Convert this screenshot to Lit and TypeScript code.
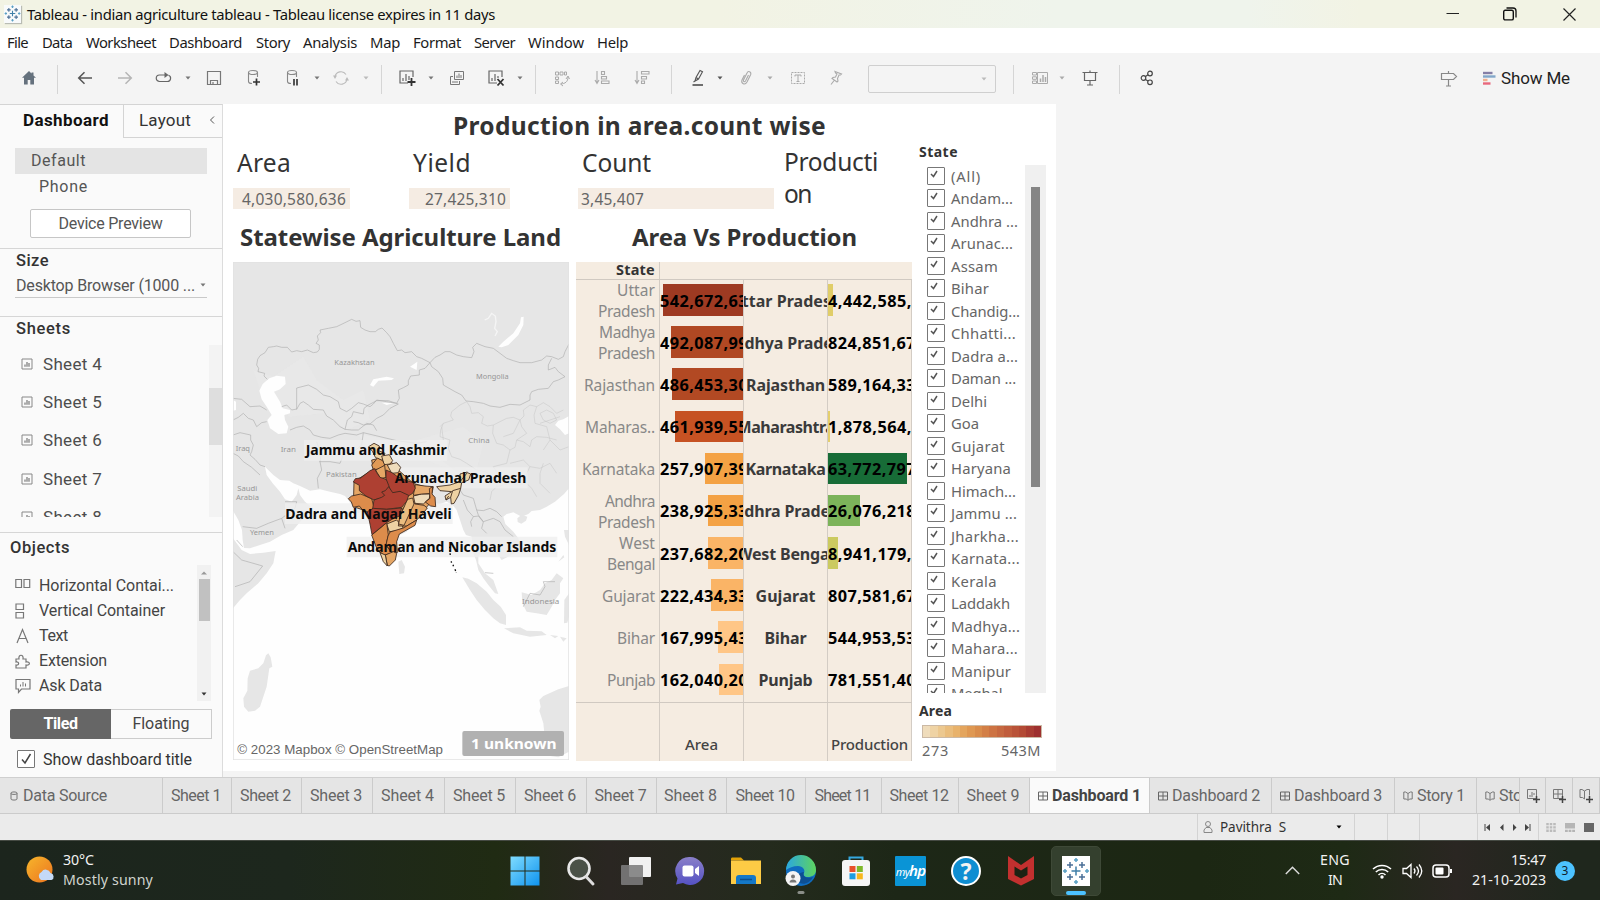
import { LitElement, html, svg, css } from "lit";
import { customElement, property } from "lit/decorators.js";

/** One line of text whose tracking is adjusted so that it spans `w` pixels. */
@customElement("fit-text")
class FitText extends LitElement {
  @property({ type: Number }) w = 0;
  @property() text = "";
  static styles = css`
    :host { display: inline-block; white-space: pre; flex: none; }
    span { display: inline-block; }
  `;
  firstUpdated() {
    const s = this.renderRoot.querySelector("span") as HTMLElement;
    const nat = s.getBoundingClientRect().width;
    if (this.w && nat) {
      s.style.letterSpacing = (this.w - nat) / this.text.length + "px";
      this.style.width = this.w + "px";
    }
  }
  render() { return html`<span>${this.text}</span>`; }
}

const t = (text: string, w = 0) => html`<fit-text .text=${text} .w=${w}></fit-text>`;

/** Items given as [left, width, content]; spacing between them is derived. */
type Item = [number, number, unknown, string?];
const row = (items: Item[], start = 0) => {
  let x = start;
  return items.map(([l, w, c, cls]) => {
    const m = l - x;
    x = l + w;
    return html`<div class="cell ${cls || ""}" style="margin-left:${m}px;width:${w}px">${c}</div>`;
  });
};

const icon = (w: number, h: number, body: unknown, cls = "") =>
  html`<svg class="ic ${cls}" width=${w} height=${h} viewBox="0 0 ${w} ${h}">${body}</svg>`;

const caret = (c = "#777") => icon(6, 4, svg`<path d="M0.5 0.5h5L3 3.6z" fill=${c}/>`);

const T = {
  home: icon(16, 16, svg`<path d="M8 1 1 7.800h2v6.700h3.700V10h2.600v4.500H13V7.800h2L12.500 5.400V2.500h-2v1z" fill="#65717d"/>`),
  back: icon(16, 14, svg`<path d="M15 7H2M7.500 1.200 1.700 7l5.800 5.800" fill="none" stroke="#555" stroke-width="1.500"/>`),
  fwd: icon(16, 14, svg`<path d="M1 7h13M8.500 1.200 14.300 7l-5.800 5.800" fill="none" stroke="#b5b5b5" stroke-width="1.500"/>`),
  redo: icon(18, 14, svg`<path d="M10.500 4H4.500a3.200 3.200 0 0 0 0 6.500h8a3.200 3.200 0 0 0 1-6.200" fill="none" stroke="#666" stroke-width="1.200"/><path d="M9.500 1v6l4-3z" fill="#666"/>`),
  save: icon(16, 16, svg`<path d="M1.500 1.500h13v13h-13zM4.500 14.500v-4h7v4M7 14v-2" fill="none" stroke="#777" stroke-width="1.200"/>`),
  dbAdd: icon(14, 18, svg`<g fill="none" stroke="#888" stroke-width="1.100"><ellipse cx="6" cy="3.500" rx="4.500" ry="2"/><path d="M1.500 3.500v9c0 1 1.500 2 3.500 2M10.500 3.500V8"/></g><path d="M9.500 9.500v7M6 13h7" stroke="#333" stroke-width="1.700"/>`),
  dbPause: icon(14, 18, svg`<g fill="none" stroke="#888" stroke-width="1.100"><ellipse cx="6" cy="3.500" rx="4.500" ry="2"/><path d="M1.500 3.500v9c0 1 1.500 2 3.500 2M10.500 3.500V8"/></g><path d="M8 10v6.500M11 10v6.500" stroke="#444" stroke-width="1.800"/>`),
  refresh: icon(16, 16, svg`<path d="M2 7a6 6 0 0 1 11-2.500M14 9a6 6 0 0 1-11 2.500" fill="none" stroke="#bbb" stroke-width="1.100"/><path d="M0 5.500h4L2 9zM12 10.500h4L14 7z" fill="#bbb"/>`),
  newSheet: icon(18, 18, svg`<g fill="none" stroke="#666" stroke-width="1.200"><path d="M15 8V2H2v12h8"/><path d="M5 12V9M8 12V5M11 11V7"/></g><path d="M13.500 9v8M9.500 13h8" stroke="#333" stroke-width="1.800"/>`),
  dup: icon(16, 16, svg`<g fill="none" stroke="#777" stroke-width="1"><path d="M5.500 1.500h9v8h-9zM8 8V5.500M10 8V3.500M12 8V5M4 6.500H1.500v8h9V11M4 13v-2M6 13v-2M8 13v-2"/></g>`),
  clear: icon(18, 18, svg`<g fill="none" stroke="#666" stroke-width="1.200"><path d="M15 8V2H2v12h8"/><path d="M5 12V9M8 12V5M11 9V7"/></g><path d="m10.500 10 6 6.500m0-6.500-6 6.500" stroke="#333" stroke-width="1.800"/>`),
  swap: icon(16, 18, svg`<g fill="none" stroke="#aaa" stroke-width="1"><path d="M1.500 3h3v3h-3zM6 3h3v3H6zM10.500 3h2v3h-2zM1.500 8h3v2.500h-3zM1.500 12h3v2.500h-3z"/><path d="M14 8c0 5-3 6.500-7 7M12 10l2-3 1.500 3M9 13l-2.500 2L9 17"/></g>`),
  asc: icon(16, 16, svg`<g fill="none" stroke="#aaa" stroke-width="1.100"><path d="M3 1v12M1 10l2 3.500L5 10M7.500 1.500h3v3h-3zM7.500 6.500h5v2.500h-5zM7.500 11h7.500v2.500H7.500z"/></g>`),
  desc: icon(16, 16, svg`<g fill="none" stroke="#aaa" stroke-width="1.100"><path d="M3 1v12M1 10l2 3.500L5 10M7.500 1.500H15V4H7.500zM7.500 6.500h5v2.500h-5zM7.500 11h3v2.500h-3z"/></g>`),
  pen: icon(14, 18, svg`<path d="m4 12 1-3.500L9 1.500l2.500 1.300L7.500 10zM5 8.500l2.500 1.500M4 12l-1.500 1" fill="none" stroke="#555" stroke-width="1.100"/><path d="M1.500 16h10.500" stroke="#555" stroke-width="1.700"/>`),
  clip: icon(14, 16, svg`<path d="m9.500 5-3 6c-.8 1.300-2.500.7-2-1L8 3c1-2.500 4.500-1.500 3.700 1.500L8 12c-2 3.500-6.300 2-5-2l2.500-5" fill="none" stroke="#aaa" stroke-width="1.100"/>`),
  text: icon(16, 14, svg`<path d="M1.500 1.500h13v11h-13z" fill="none" stroke="#aaa" stroke-dasharray="2 1"/><path d="M5 5.500V4h6v1.500M8 4v6.500M6.500 10.500h3" fill="none" stroke="#aaa"/>`),
  pin: icon(14, 16, svg`<path d="M6 1.500 12.500 4l-1 1-1.500 0-1.500 3.500.5 2.500-1 1L3 8.500l1-1L6.500 7 8 4 6.500 3zM5.500 10 2 14.500" fill="none" stroke="#aaa" stroke-width="1.100"/>`),
  cards: icon(18, 14, svg`<g fill="none" stroke="#aaa"><path d="M1.500 1.500h4v2.500h-4zM1.500 5.800h4v2.500h-4zM1.500 10h4v2.500h-4zM6.500 1.500h10v11h-10z"/><path d="M9.500 11V7.500M12 11V4M14.500 11V6" stroke-width="1.500"/></g>`),
  present: icon(16, 16, svg`<path d="M0.500 2.500h15M8 .5v2M2.500 3v7.500h11V3M8 10.500V15M5 15h6" fill="none" stroke="#666" stroke-width="1.200"/>`),
  share: icon(14, 16, svg`<g fill="none" stroke="#444" stroke-width="1.200"><circle cx="3.500" cy="8" r="2.300"/><circle cx="10" cy="3.500" r="2.300"/><circle cx="10" cy="12.300" r="2.300"/><path d="m5.500 6.600 2.500-1.800M5.500 9.400 8 11"/></g>`),
  guide: icon(18, 18, svg`<path d="M1.500 4.500h12l3 3-3 3h-12zM8.500 2v2.500M8.500 10.500V17M6 17h5" fill="none" stroke="#888" stroke-width="1.200"/>`),
  showme: icon(13, 14, svg`<path d="M0 2h9.500" stroke="#857fa6" stroke-width="2.400"/><path d="M0 5.500h12.500" stroke="#82a6c9" stroke-width="2.400"/><path d="M0 9h4.500" stroke="#f0b08f" stroke-width="2.400"/><path d="M0 12.500h7.500" stroke="#e8677c" stroke-width="2.400"/>`),
};

const tableauMark = (s: number, sw: number) => html`<svg class="ic" width=${s} height=${s} viewBox="0 0 28 28">
  <g stroke-width=${sw} fill="none">
    <path stroke="#3f7fa8" d="M14 9.500v9M9.500 14h9"/>
    <path stroke="#4a6f96" d="M8 5v6M5 8h6M20 5v6M17 8h6M8 17v6M5 20h6M20 17v6M17 20h6"/>
    <path stroke="#5aa0c4" d="M14 1v4M12 3h4M14 23v4M12 25h4M3 12v4M1 14h4M25 12v4M23 14h4"/>
  </g></svg>`;

const sheetIcon = icon(12, 12, svg`<path d="M1 1h10v10H1z" fill="none" stroke="#888"/><path d="M4 8.800V6.500M6 8.800V4M8 8.800V5" stroke="#777" stroke-width="1.200"/>`);
const dashIcon = icon(10, 10, svg`<path d="M.5 1h9v8h-9zM5 1v8M.5 5h9" fill="none" stroke="#666"/>`);
const storyIcon = icon(10, 10, svg`<path d="M2.500 1H.8v7h2.700L5 9.500 6.500 8h2.700V1H7.500M2.500 1 5 2.500 7.500 1M5 2.500V9" fill="none" stroke="#777" stroke-width="1"/>`);
const dsIcon = icon(8, 10, svg`<path d="M1 2c0-1.400 6-1.400 6 0v6c0 1.400-6 1.400-6 0zM1 2.500c0 1.200 6 1.200 6 0" fill="none" stroke="#777"/>`);
const plusOn = (g: unknown) => icon(16, 16, svg`<g fill="none" stroke="#777">${g}</g><path d="M11.500 8v7M8 11.500h7" stroke="#444" stroke-width="1.500"/>`);

const OBJECTS: [unknown, string, number][] = [
  [icon(16, 16, svg`<path d="M.8 1.500h5.700v8H.8zM9 1.500h5.700v8H9z" fill="none" stroke="#777" stroke-width="1.200"/>`), "Horizontal Contai...", 135],
  [icon(16, 16, svg`<path d="M1 1h7.500v5.500H1zM1 9.500h7.500V15H1z" fill="none" stroke="#777" stroke-width="1.200"/>`), "Vertical Container", 126],
  [icon(16, 16, svg`<path d="M2 15 7.500 1.500 13 15M4 10.500h7" fill="none" stroke="#777" stroke-width="1.200"/>`), "Text", 29],
  [icon(16, 16, svg`<path d="M1 6h3c-1-5 5-5 4 0h3v3c4.500-1 4.500 4 0 3v3H1v-3c3.500.5 3.500-3.500 0-3z" fill="none" stroke="#777" stroke-width="1.200"/>`), "Extension", 68],
  [icon(16, 16, svg`<path d="M1 1.500h14v9.500H6.500L3.500 14.500V11H1z" fill="none" stroke="#777" stroke-width="1.200"/><path d="M5.500 8.500v-2M8 8.500V4M10.500 8.500V5.500" stroke="#777"/>`), "Ask Data", 63],
];

const STATES: [string, number][] = [
  ["(All)", 29], ["Andam...", 61], ["Andhra ...", 66], ["Arunac...", 61], ["Assam", 46], ["Bihar", 37],
  ["Chandig...", 68], ["Chhatti...", 64], ["Dadra a...", 66], ["Daman ...", 64], ["Delhi", 35], ["Goa", 27],
  ["Gujarat", 53], ["Haryana", 59], ["Himach...", 64], ["Jammu ...", 65], ["Jharkha...", 67], ["Karnata...", 68],
  ["Kerala", 45], ["Laddakh", 58], ["Madhya...", 68], ["Mahara...", 66], ["Manipur", 59], ["Meghal...", 62],
];

interface Rec { label: string[]; mid: string; mw: number; area: string; aw: number; ac: string; prod: string; pw: number; pc: string; lw: number[] }
const DATA: Rec[] = [
  { label: ["Uttar", "Pradesh"], lw: [38, 57], mid: "Uttar Pradesh", mw: 112, area: "542,672,63", aw: 80, ac: "#9e3a22", prod: "4,442,585,", pw: 5, pc: "#e0cd68" },
  { label: ["Madhya", "Pradesh"], lw: [56, 57], mid: "Madhya Pradesh", mw: 131, area: "492,087,99", aw: 72, ac: "#b04823", prod: "824,851,67", pw: 0, pc: "" },
  { label: ["Rajasthan"], lw: [71], mid: "Rajasthan", mw: 79, area: "486,453,30", aw: 71, ac: "#b24923", prod: "589,164,33", pw: 0, pc: "" },
  { label: ["Maharas.."], lw: [70], mid: "Maharashtra", mw: 98, area: "461,939,55", aw: 68, ac: "#c65223", prod: "1,878,564,", pw: 2, pc: "#e5cf6c" },
  { label: ["Karnataka"], lw: [73], mid: "Karnataka", mw: 80, area: "257,907,39", aw: 38, ac: "#f4a244", prod: "63,772,797", pw: 79, pc: "#176c37" },
  { label: ["Andhra", "Pradesh"], lw: [50, 57], mid: "Andhra Pradesh", mw: 125, area: "238,925,33", aw: 35, ac: "#f4a244", prod: "26,076,218", pw: 32, pc: "#7cb35a" },
  { label: ["West", "Bengal"], lw: [36, 48], mid: "West Bengal", mw: 97, area: "237,682,20", aw: 35, ac: "#fab466", prod: "8,941,179,", pw: 10, pc: "#cbca60" },
  { label: ["Gujarat"], lw: [53], mid: "Gujarat", mw: 60, area: "222,434,33", aw: 32, ac: "#fab466", prod: "807,581,67", pw: 0, pc: "" },
  { label: ["Bihar"], lw: [38], mid: "Bihar", mw: 42, area: "167,995,43", aw: 25, ac: "#ffc686", prod: "544,953,53", pw: 0, pc: "" },
  { label: ["Punjab"], lw: [48], mid: "Punjab", mw: 54, area: "162,040,20", aw: 24, ac: "#ffc686", prod: "781,551,40", pw: 0, pc: "" },
];

const LEGEND = ["#efdcbb", "#efd3a4", "#ecc88f", "#eabd7c", "#e8b26b", "#e4a55d", "#df9852", "#d98c4b", "#d37f46", "#cd7343", "#c66840", "#c05d3c", "#b95338", "#b34a35", "#a83c32", "#9e302f"];

const TABS: Item[] = [
  [0, 163, html`<span class="in10">${dsIcon}</span>${t("Data Source", 84)}`, "tab ds"],
  ...([[163, 232, "Sheet 1", 50], [232, 302, "Sheet 2", 51], [302, 373, "Sheet 3", 52], [373, 445, "Sheet 4", 53], [445, 516, "Sheet 5", 52], [516, 587, "Sheet 6", 52], [587, 657, "Sheet 7", 52], [657, 727, "Sheet 8", 53], [727, 806, "Sheet 10", 59], [806, 882, "Sheet 11", 56], [882, 959, "Sheet 12", 59], [959, 1030, "Sheet 9", 53]] as [number, number, string, number][])
    .map(([a, b, s, w]): Item => [a, b - a, t(s, w), "tab sheet"]),
  [1030, 120, html`${dashIcon}${t("Dashboard 1", 89)}`, "tab dash on"],
  [1150, 122, html`${dashIcon}${t("Dashboard 2", 88)}`, "tab dash"],
  [1272, 123, html`${dashIcon}${t("Dashboard 3", 88)}`, "tab dash"],
  [1395, 82, html`${storyIcon}${t("Story 1", 48)}`, "tab dash"],
  [1477, 43, html`${storyIcon}${t("Story 2", 48)}`, "tab dash"],
  [1520, 26, plusOn(svg`<path d="M2.500 1.500h9v9h-9zM5 9V7M7 9V4M9 7V5"/>`), "tab"],
  [1546, 27, plusOn(svg`<path d="M2.500 1.500h9v9h-9zM7 1.500v9M2.500 6h9"/>`), "tab"],
  [1573, 27, plusOn(svg`<path d="M4 1.500H2v8h2.500l2 1.500M9 1.500h2.500v6M4 1.500 6.500 3 9 1.500M6.500 3v8"/>`), "tab"],
];

const map = svg`
  <rect x="9" y="486" width="1008" height="1494" fill="#fefefe"/>
  <g transform="translate(0 960)">
    <g fill="#e6e6e6">
      <path d="M9-480H1017V-12L1000-2 985 2 975 15 990 28 1005 45 1017 40V205L1002 222 975 245 950 260 930 270 905 273 895 282 875 290 850 277 830 282 820 290 826 312 850 335 865 355 872 380 850 402 815 420 802 402 785 395 770 385 755 395 745 410 745 430 765 460 790 480 805 522 795 520 775 495 760 475 745 450 738 420 730 400 725 350 708 345 700 330 690 300 680 270 668 255 650 245 620 255 603 262 580 280 560 300 530 335 505 347 500 390 495 415 470 440 455 415 445 380 430 345 420 290 415 272 400 272 385 280 370 265 355 240 345 228 330 222 300 215 270 208 240 212 210 198 190 190 178 182 150 180 130 165 105 140 110 165 128 190 150 215 165 238 185 245 200 225 205 205 210 225 225 245 245 262 238 280 215 300 190 330 155 345 120 365 90 375 60 385 42 384 38 360 36 330 25 300 9 272Z"/>
      <path d="M9 355 35 390 60 402 100 398 137 393 130 430 110 460 85 490 50 520 30 540 9 565Z"/>
      <path d="M505 425 515 420 525 440 522 460 508 462Z"/>
      <path d="M697 472 715 476 740 490 770 515 790 540 812 560 828 585 828 615 810 610 790 595 765 570 740 540 720 510Z"/>
      <path d="M822 625 870 622 890 632 935 634 950 645 900 650 850 640ZM960 645 985 648 975 655ZM990 650 1010 655 1000 665Z"/>
      <path d="M875 517 905 525 930 510 945 490 965 480 980 460 1000 475 990 490 990 520 975 540 965 560 950 585 920 580 890 575 877 550Z"/>
      <path d="M1017 520 1003 540 1002 610 1012 608 1017 590Z"/>
      <path d="M862 295 875 284 892 290 888 302 874 311 863 306Z"/>
      <path d="M1002 330 1017 330V375L1005 350ZM985 425 1000 405 1003 412Z"/>
      <path d="M115 700 122 712 127 740 118 745 110 800 90 860 75 872 55 875 42 860 40 835 52 812 53 775 60 752 85 745 100 730 108 706Z"/>
      <path d="M1017 798 985 808 940 828 928 840 932 860 928 872 940 910 945 960 960 1008 985 1012 1017 995Z"/>
    </g>
    <g fill="#ececec">
      <path d="M70-150 130-130 220-190 260-120 340-60 400-90 420 0 350 30 280-20 180-10 100-60ZM560 60 700 20 760 70 740 150 640 140 560 110Z" opacity=".4"/>
      <path d="M380 40 480 60 620 110 700 170 600 190 520 160 440 110Z" opacity=".5"/>
    </g>
    <g fill="#fefefe">
      <path d="M118-125 140-133 165-130 167-108 150-92 132-85 150-55 158-35 180-30 180-20 163-15 165 0 175 20 170 40 145 42 120 25 112 0 125-15 110-40 95-62 88-88 98-108Z"/>
      <path d="M9-60 18-55 18-30 9-28ZM420-105 430-122 470-130 492-125 485-120 445-118 430-100Z"/>
      <path d="M805-220 820-235 850-260 870-290 873-308 881-310 880-285 865-255 835-225 815-218ZM455-52 490-50 470-45ZM540-160 562-175 560-150Z"/>
    </g>
    <path d="M764-300 775-305 785-320 796-312 798-295 794-275 802-265 795-252" fill="none" stroke="#f5f5f5" stroke-width="4"/>
    <g fill="none" stroke="#a9a9a9" stroke-width="1.800" stroke-linejoin="round">
      <path d="M112-122 102-132 104-140 84-145 86-155 80-165 83-182 90-193 105-202 115-218 130-220 140-222 155-218 172-218 185-204 200-208 215-205 232-210 250-202 262-204 268-212 268-225 258-230 265-240 262-252 272-262 270-270 295-275 320-280 345-292 365-302 378-296 390-298 392-278 405-270 420-265 436-265 445-272 456-276 470-262 480-250 490-230 502-208 515-210 525-202 545-205 560-190 575-185 600-172 585-155 568-150 568-135 542-132 535-118 535-105 520-97 505-90 508-65 500-50 470-55 440-60 430-48 420-40 400-48 385-52 365-35 350-25 330-35 325-55 300-70 280-75 260-92 235-105 200-96V-32"/>
      <path d="M600-172 615-188 630-195 645-205 660-205 680-195 700-190 725-187 732-205 728-218 740-230 765-220 790-215 810-200 830-185 850-178 870-172 905-172 935-180 950-192 965-190 985-182 1000-190 1005-205 1017-228M955-150 975-158 985-145 1005-130 985-120 970-115 955-95 925-92 905-85 900-75 900-60 870-45 840-47 810-38 780-42 760-50 730-55 708-57 695-75 675-85 640-105 638-125 625-145 605-160 600-172M965-185 955-165 955-150"/>
      <path d="M200-32 210-50 220-55 235-45 250-32 280-30 290-12 310 0 330 20 345 28 365 30 385 30 400 18 410 10 430 15 440 32M155-40 170-45 185-30 200-33M345 28 352 0 365-10 370-25 400-18 402-35 415-45 440-58 475-58 505-48 480-35 460-15 440-5 420 12 400 15 385 8 370 5"/>
      <path d="M180 30 200 22 220 18 240 30 250 45 275 52 300 55 325 45 345 40 380 45 400 38M260 65 265 80 275 95 270 125 275 150 262 175 265 205M268 125 300 125 330 130 340 105 350 90 375 92 395 75 400 38 450 50 500 62 560 70 590 65M9-65 35-62 60-40 90-42 110-30M9 0 25-8 40-20 55-5 70 0 80 20 95 8 110 5M9 45 30 38 62 45 62 60 70 75 65 95 60 105 75 118 90 135 105 140M9 100 25 108 40 125 65 142 90 165"/>
      <path d="M38 320 80 325 115 310 155 295 165 325M155 295 195 265 200 245 165 245M9 395 35 420 98 438 60 485 15 500M20 360 38 380M675 200 690 210 700 225 730 235 740 270 760 272 780 265 800 275 815 290M700 240 712 270 730 290 722 305 725 320M740 270 745 285 760 305 790 295 810 305 825 330 850 350M730 290 745 288 760 306 755 325 770 340M880 560 900 520 930 525 945 500 940 485 975 485M790 460 765 458"/>
    </g>
    <g fill="none" stroke="#c3c3c3" stroke-width="1.400">
      <path d="M630 20 640 10 655 5 670 0 662-12 665-25 690-45 710-55 720-40 725-20 745-22 760-10 755 10 772 18 790 15 810 5 830-5 850-8 870 0 882-12 880-30 900-45 920-40 940-52 960-40 980-20 1000-30M640 10 632 30 630 50 660 60 655 85 665 110 690 118 710 130 740 150 765 155 790 170M790 15 788 40 800 70 820 75 840 90 855 82 860 60 880 65 900 80 905 60 920 50 950 52 980 60M840 90 835 110 830 130 790 140 805 165 800 200 785 215 780 240M840 130 880 120 900 140 930 145 960 130 980 160M900 140 890 160 890 190 865 195 840 190 800 200M890 190 905 205 920 230M940 130 930 160 930 190 960 220M870 0 875 20 890 40 875 50 860 60M920-40 912-15 915 10 950 20 960 60 940 90"/>
      <path d="M650 175 690 160 730 180 760 165 790 180M870 0 850 40 820 50M930 10 990-10M960 60 990 90 1017 80M635 20 640 60M930-20 950-30 970-20 980 0 960 10 940 0Z"/>
    </g>
    <g font-size="23" fill="#969696" font-family="Noto Sans">
      <text x="313" y="-166" textLength="121" lengthAdjust="spacingAndGlyphs">Kazakhstan</text><text x="738" y="-122" textLength="98" lengthAdjust="spacingAndGlyphs">Mongolia</text>
      <text x="715" y="68" textLength="64" lengthAdjust="spacingAndGlyphs">China</text><text x="17" y="94" textLength="43" lengthAdjust="spacingAndGlyphs">Iraq</text><text x="152" y="95" textLength="46" lengthAdjust="spacingAndGlyphs">Iran</text>
      <text x="288" y="172" textLength="92" lengthAdjust="spacingAndGlyphs">Pakistan</text><text x="22" y="214" textLength="60" lengthAdjust="spacingAndGlyphs">Saudi</text><text x="18" y="241" textLength="69" lengthAdjust="spacingAndGlyphs">Arabia</text>
      <text x="60" y="345" textLength="72" lengthAdjust="spacingAndGlyphs">Yemen</text><text x="876" y="552" textLength="112" lengthAdjust="spacingAndGlyphs">Indonesia</text>
    </g>
    <path d="M222 60H652V122H222ZM490 142H893V205H490ZM165 250H668V312H165ZM350 350H982V412H350Z" fill="#efefef" opacity=".8"/>
    <g stroke="#3d2a1e" stroke-width="2.600" stroke-linejoin="round">
      <path d="M425 120 470 110 505 150 550 190 600 205 600 250 550 305 500 345 495 410 472 436 440 380 415 275 370 260 372 185 430 148Z" fill="#e5a665"/>
      <g fill="#eed2a3">
        <path d="M416 80 432 70 448 78 446 92 465 100 455 122 436 112 428 95Z"/>
        <path d="M455 108 478 104 488 122 480 132 462 134Z"/>
        <path d="M472 135 500 128 512 142 505 158 485 160Z" fill="#efdcbb"/>
        <path d="M470 312 500 300 520 322 505 332 478 335Z"/>
        <path d="M550 228 575 222 600 222 598 235 580 252 555 250Z" fill="#efdcbb"/>
        <path d="M620 200 660 195 690 185 712 158 722 162 716 180 695 188 692 205 686 225 672 250 664 252 662 232 648 240 645 228 665 215 630 212ZM690 185 690 162 712 156M662 232 668 212 692 205M648 240 656 228"/>
      </g>
      <g fill="#e5a665">
        <path d="M425 135 442 114 458 122 464 135 450 148 430 148Z" fill="#e09a56"/>
        <path d="M437 150 464 136 468 172 452 176Z"/>
        <path d="M545 238 555 252 582 256 592 264 575 285 560 300 530 318 505 318 510 288 520 262Z"/>
        <path d="M522 262 532 238 548 234 552 252 538 282 522 316 506 312 510 288Z" fill="#ebbd80"/>
        <path d="M355 236 365 228 392 222 425 236 432 262 415 278 400 272 388 258 370 262 364 246Z" fill="#dd8c4b"/>
        <path d="M556 194 585 198 610 200 606 220 575 222 550 226Z"/>
        <path d="M598 206 608 200 606 222 615 232 617 260 602 258 586 246 600 235Z" fill="#dd8c4b"/>
        <path d="M425 345 450 325 470 308 475 345 468 375 486 400 462 405 442 390Z" fill="#dd8c4b"/>
        <path d="M474 348 480 336 520 324 560 300 555 316 508 342 500 365 502 398 485 395 468 375Z" fill="#dd8c4b"/>
        <path d="M466 405 490 395 500 400 496 420 478 438 472 436Z"/>
        <path d="M450 398 466 405 472 438 460 425Z" fill="#eed2a3"/>
      </g>
      <g fill="#ae4032">
        <path d="M370 186 376 176 392 174 405 164 420 152 434 146 440 158 450 172 468 178 482 196 484 225 455 234 432 240 408 228 388 212 388 196Z"/>
        <path d="M468 150 486 158 500 168 525 180 550 188 556 205 548 220 535 228 510 216 484 222 476 196 468 176Z"/>
        <path d="M428 266 432 240 455 232 464 226 455 216 466 212 476 200 488 218 510 214 536 226 530 244 515 262 470 268Z"/>
        <path d="M412 275 430 265 470 268 515 264 508 288 486 298 470 308 445 328 426 344 420 312Z"/>
      </g>
    </g>
    <path d="M659 380 661 410M663 424 665 428M669 434 671 440M675 448 679 458" stroke="#111" stroke-width="4" stroke-dasharray="5 5"/>
    <g font-size="43" font-weight="700" fill="#0b0b0b" font-family="Noto Sans">
      <text x="227" y="106" textLength="423" lengthAdjust="spacingAndGlyphs">Jammu and Kashmir</text>
      <text x="494" y="190" textLength="395" lengthAdjust="spacingAndGlyphs">Arunachal Pradesh</text>
      <text x="166" y="297" textLength="499" lengthAdjust="spacingAndGlyphs">Dadra and Nagar Haveli</text>
      <text x="353" y="397" textLength="626" lengthAdjust="spacingAndGlyphs">Andaman and Nicobar Islands</text>
    </g>
    <rect x="14" y="966" width="634" height="48" fill="#fff" opacity=".7"/>
    <text x="22" y="1002" font-size="40" font-family="Liberation Sans" fill="#666" textLength="617" lengthAdjust="spacingAndGlyphs">© 2023 Mapbox © OpenStreetMap</text>
    <rect x="697" y="933" width="305" height="75" rx="6" fill="#b1b1b1"/>
    <text x="723" y="988" font-size="43" font-weight="700" font-family="Noto Sans" fill="#fff" textLength="257" lengthAdjust="spacingAndGlyphs">1 unknown</text>
  </g>
  <rect x="10" y="487" width="1006" height="1492" fill="none" stroke="#e2e2e2" stroke-width="2.500"/>`;

const task = {
  weather: icon(30, 30, svg`<defs><linearGradient id="sun" x2="1" y2="1"><stop stop-color="#f7b62b"/><stop offset="1" stop-color="#ec7420"/></linearGradient></defs><circle cx="13.500" cy="13.500" r="13" fill="url(#sun)"/><path d="M15 24a4.500 4.500 0 0 1 .5-8 5 5 0 0 1 9 1 3.700 3.700 0 0 1 1 7z" fill="#c4d9f7"/>`),
  win: icon(30, 30, svg`<defs><linearGradient id="wn" x2="1" y2="1"><stop stop-color="#7fdcff"/><stop offset="1" stop-color="#0f93ee"/></linearGradient></defs><path d="M.5.5h14v14H.5zM15.500.5h14v14h-14zM.5 15.500h14v14H.5zM15.500 15.500h14v14h-14z" fill="url(#wn)"/>`),
  search: icon(28, 30, svg`<circle cx="12" cy="12.500" r="10.500" fill="#4a5147" stroke="#e8e8e8" stroke-width="2.600"/><path d="m19 20.500 7 7.500" stroke="#ddd" stroke-width="3" stroke-linecap="round"/>`),
  view: icon(30, 30, svg`<rect x="8" y="1" width="22" height="20" rx="1" fill="#f1f1f1"/><rect x="0" y="9" width="22" height="20" rx="1" fill="#7c7c7c" opacity=".88"/>`),
  chat: icon(30, 30, svg`<defs><linearGradient id="ch" x2="0" y2="1"><stop stop-color="#8a7fc8"/><stop offset="1" stop-color="#5552c4"/></linearGradient></defs><path d="M15 1a14 14 0 1 1-7 26l-7 1.500 1.500-6A14 14 0 0 1 15 1z" fill="url(#ch)"/><rect x="7.500" y="9.500" width="11" height="11" rx="2" fill="#fff"/><path d="m20 13 4-3v10l-4-3z" fill="#fff"/>`),
  files: icon(32, 30, svg`<path d="M1 3c0-1 .5-1.500 1.500-1.500H11l3 3H1z" fill="#e2a208"/><path d="M1 4.500h30V28H1z" fill="#fdcb45"/><path d="M6 28v-6c0-2 1-3 3-3h14c2 0 3 1 3 3v6z" fill="#1478c8"/><path d="M10 23.500h12" stroke="#0a4f8f" stroke-width="1.500"/>`),
  edge: icon(32, 32, svg`<defs><linearGradient id="eg" x2="1" y2="0"><stop stop-color="#2aa7e0"/><stop offset="1" stop-color="#5ed45f"/></linearGradient></defs><circle cx="16" cy="16" r="15" fill="#0f6cc0"/><path d="M1 15A15 15 0 0 1 31 15c0 5-4 7-8 7s-5-2-4-4c1.500-3-1-7-6-7S4 13 1 15z" fill="url(#eg)"/><path d="M19 17c-2 4 2 7 9 5-3 6-9 8-13 6s-5-10 4-11z" fill="#0d4f93"/><circle cx="8" cy="23.500" r="7.500" fill="#f4f4f4"/><circle cx="8" cy="21.500" r="2" fill="#777"/><path d="M4.500 27.500c0-4 7-4 7 0z" fill="#777"/><rect x="12.500" y="36" width="7" height="3" rx="1.500" fill="#8b8f89"/>`),
  store: icon(30, 32, svg`<path d="M8.500 8V2.500h13V8" fill="none" stroke="#35a8df" stroke-width="2"/><rect x="1" y="5" width="28" height="26" rx="3" fill="#f5f5f5"/><path d="M8.500 11h6v6h-6z" fill="#e8502b"/><path d="M15.800 11h6v6h-6z" fill="#7eb82b"/><path d="M8.500 18.300h6v6h-6z" fill="#1d9de0"/><path d="M15.800 18.300h6v6h-6z" fill="#f7b71c"/>`),
  hp: html`<span class="hp">my<b>hp</b></span>`,
  help: html`<span class="help">?</span>`,
  mcafee: icon(28, 32, svg`<path d="M1 1 14 10 27 1v23L14 30.500 1 24z" fill="#c2302f"/><path d="M7.500 11.500 14 15.500l6.500-4V20L14 23.500 7.500 20z" fill="#1c2213"/>`),
};

@customElement("app-root")
class AppRoot extends LitElement {
  static styles = css`
    :host { display: block; width: 1600px; height: 900px; overflow: hidden; background: #f4f4f4; color: #111; font-family: "Noto Sans", "Open Sans", sans-serif; }
    * { box-sizing: border-box; }
    .ic { display: block; flex: none; overflow: visible; }
    .bar { display: flex; align-items: center; }
    .cell { flex: none; display: flex; align-items: center; justify-content: center; }
    .title { height: 28px; font-size: 14.800px; line-height: 28px; background: linear-gradient(90deg, #f2f3e4 0 45%, #eff4ec 66% 78%, #f2f3e4 85%); }
    .title .logo { width: 17px; height: 18px; background: #f8fafb; box-shadow: 1px 1px 1px #b9bcb4; }
    .menu { height: 25px; background: #fff; font-size: 14.800px; color: #1c1c1c; padding-top: 2px; line-height: 22px; }
    .tools { height: 51px; background: #f4f4f4; font-family: Roboto, sans-serif; font-size: 17px; color: #222; }
    .tools .cell { margin-top: -1px; }
    .tools .combo, .tools .sep { margin-top: 1px; }
    .sep { height: 29px; background: #d5d5d5; }
    .combo { height: 28px; border: 1px solid #cfcfcf; border-radius: 2px; justify-content: flex-end; padding-right: 8px; }
    .body { display: flex; height: 673px; }
    .side { width: 223px; flex: none; background: #fafafa; border-top: 1px solid #d4d4d4; border-right: 1px solid #dcdcdc; font-family: Roboto, sans-serif; font-size: 16px; color: #555; display: flex; flex-direction: column; }
    .ptabs { display: flex; height: 33px; flex: none; font-size: 17px; line-height: 31px; color: #333; }
    .pt1 { width: 123px; padding-left: 23px; font-weight: 700; color: #111; }
    .pt2 { flex: 1; border-left: 1px solid #d4d4d4; border-bottom: 1px solid #d4d4d4; padding: 0 0 2px 15px; display: flex; gap: 18px; align-items: center; line-height: 30px; }
    .dev { margin: 10px 15px 0; height: 26px; line-height: 25px; background: #e4e4e4; padding-left: 16px; }
    .phone { height: 24px; line-height: 25px; padding-left: 39px; }
    .preview { margin: 11px 31px 0 30px; height: 29px; line-height: 27px; border: 1px solid #c6c6c6; border-radius: 2px; background: #fff; text-align: center; }
    .hd { font-weight: 500; color: #333; padding-left: 16px; font-size: 16.500px; border-top: 1px solid #d6d6d6; flex: none; }
    .h1 { margin-top: 10px; height: 25px; line-height: 24px; }
    .browser { height: 25px; margin: 0 15px; border-bottom: 1px solid #c9c9c9; display: flex; align-items: center; gap: 5px; padding-left: 1px; }
    .h2 { margin-top: 18px; height: 29px; line-height: 23px; }
    .sheets { display: flex; height: 172px; overflow: hidden; flex: none; justify-content: space-between; color: #4d4d4d; font-size: 17px; }
    .sh { display: flex; align-items: center; gap: 10px; height: 38.350px; padding: 0 0 1px 21px; }
    .track { width: 13px; background: #f3f3f3; padding-top: 43px; }
    .thumb { height: 57px; background: #dedede; }
    .h3 { margin-top: 15px; height: 33px; line-height: 29px; padding-left: 10px; }
    .objs { display: flex; justify-content: space-between; height: 136px; margin-right: 11px; flex: none; color: #444; overflow: hidden; }
    .ol { padding: 8px 0 0 15px; }
    .o { display: flex; gap: 8px; align-items: center; height: 25.100px; }
    .otrack { width: 14px; background: #f1f1f1; display: flex; flex-direction: column; align-items: center; padding: 6px 0 5px; }
    .othumb { width: 11px; height: 42px; margin-top: 4px; background: #c1c1c1; }
    .grow { flex: 1; }
    .seg { display: flex; margin: 8px 10px 0; height: 30px; line-height: 29px; flex: none; text-align: center; color: #444; }
    .tiled { width: 101px; background: #666; color: #fff; font-weight: 700; border-radius: 2px 0 0 2px; }
    .float { width: 101px; border: 1px solid #ccc; border-left: 0; line-height: 27px; }
    .chk { display: flex; align-items: center; gap: 8px; margin: 11px 0 0 17px; height: 18px; color: #333; }
    .box { width: 18px; height: 18px; border: 1px solid #777; background: #fff; border-radius: 1px; }
    .canvas { width: 833px; height: 667px; background: #fff; color: #333; display: flex; flex: none; }
    .left { width: 689px; flex: none; }
    .dtitle { height: 31px; overflow: hidden; font-size: 24.500px; font-weight: 700; line-height: 43px; padding-left: 230px; }
    .kpis { display: flex; height: 83px; align-items: flex-start; }
    .kpis .cell { display: block; padding-top: 11px; }
    .kt { font-size: 24.500px; line-height: 32px; margin: 0 0 0 4px; white-space: nowrap; height: 32px; margin-bottom: 9.500px; padding-top: 1px; }
    .kt.kp { padding-top: 0; }
    .kv { height: 21px; line-height: 22px; background: #f5ece3; font-size: 15.500px; color: #666; text-align: right; padding-right: 4px; }
    .kv.l { text-align: left; padding-left: 3px; }
    .h2s { display: flex; height: 44px; font-size: 24px; line-height: 36px; padding-bottom: 6px; font-weight: 700; color: #333; }
    .views { display: flex; padding-left: 10px; gap: 7px; }
    .map { display: block; width: 336px; height: 498px; flex: none; }
    .tbl { width: 336px; height: 499px; background: #f5ece1; flex: none; }
    .r { display: grid; grid-template-columns: 84px 84px 84px 84px; height: 42.180px; }
    .r > div { overflow: hidden; border-right: 1px solid #d3ccc4; position: relative; }
    .head { height: 18px; border-bottom: 1px solid #d0c9c1; font-weight: 700; }
    .head > .lab { color: #333; font-size: 14.500px; line-height: 15px; padding: 0 4px 2px 0; }
    .head > div:nth-child(n+2) { border-color: transparent; }
    .lab { text-align: right; padding-right: 4px; font-size: 15.500px; line-height: 21px; color: #888; display: flex; flex-direction: column; justify-content: center; align-items: flex-end; }
    .num, .mid { font-size: 16.300px; font-weight: 700; display: flex; align-items: center; color: #000; padding-bottom: 1px; }
    .num .txt { position: relative; }
    .mid { justify-content: center; color: #3a3a3a; font-size: 16px; }
    .fill { position: absolute; top: 4px; height: 31.500px; right: 0; }
    .p .fill { right: auto; left: 0; }
    .foot { height: 59px; border-top: 1px solid #d0c9c1; font-size: 15px; text-align: center; font-weight: 500; color: #444; line-height: 83px; }
    .right { padding: 37px 0 0 7px; width: 144px; font-size: 15px; }
    .ft { font-weight: 700; line-height: 21px; height: 24px; font-size: 14px; }
    .fl { display: flex; height: 528px; overflow: hidden; justify-content: space-between; width: 127px; }
    .fi { display: flex; align-items: center; gap: 6px; height: 22.500px; padding-left: 8px; color: #666; font-size: 14.800px; line-height: 22px; }
    .fi fit-text { margin-top: -1px; }
    .cb { width: 18px; height: 18px; border: 1px solid #777; border-radius: 1px; background: #fff; margin-top: -1px; }
    .ftrack { width: 21px; background: #f0f0f0; flex: none; padding: 22px 6px 0; }
    .fthumb { height: 300px; background: #858585; }
    .lt { font-weight: 700; font-size: 14px; line-height: 20px; margin-top: 8px; }
    .leg { display: flex; width: 120px; height: 13px; margin: 4px 0 0 3px; border: 1px solid #cbb9a5; }
    .leg i { flex: 1; }
    .ll { display: flex; justify-content: space-between; width: 119px; margin-left: 3px; color: #666; line-height: 24px; font-size: 14.500px; }
    .tabs { height: 37px; background: #e5e5e5; border-top: 1px solid #cfcfcf; border-bottom: 1px solid #cbcbcb; font-family: Roboto, sans-serif; font-size: 16px; color: #666; align-items: stretch; overflow: hidden; display: flex; }
    .tab { border-right: 1px solid #cbcbcb; overflow: hidden; }
    .tab.sheet { padding-right: 2px; }
    .tab.ds { justify-content: flex-start; gap: 5px; }
    .in10 { padding-left: 10px; }
    .tab.dash { justify-content: flex-start; padding-left: 8px; gap: 4px; }
    .tab.on { background: #fafafa; font-weight: 700; color: #444; }
    .status { height: 26px; background: #ebebeb; align-items: stretch; font-family: "Noto Sans", sans-serif; font-size: 13.500px; color: #333; }
    .ln { background: #d3d3d3; }
    .task { height: 60px; border-top: 1px solid #454a43; color: #f2f2f2; font-size: 14.200px; background: linear-gradient(90deg, #1c251d 0, #1d271d 18%, #202b13 31%, #2a2622 38%, #242b1d 48%, #1d2717 56%, #1c2713 75%, #1e2a15 84%, #2a2622 91%, #1f271d 98%); }
    .two { flex-direction: column; line-height: 19.500px; padding-bottom: 2px; }
    .two.a { align-items: flex-start; }
    .two.e { align-items: flex-end; }
    .dim { color: #d0d4ce; }
    .hp { width: 31px; height: 30px; background: #0a94d6; color: #fff; font-size: 11px; font-style: italic; line-height: 28px; text-align: center; letter-spacing: -0.800px; border-radius: 1px; }
    .hp b { font-size: 15px; font-weight: 600; }
    .help { width: 30px; height: 30px; border-radius: 50%; border: 2px solid #fff; background: #0f8ed2; font-size: 23px; line-height: 26px; font-weight: 700; text-align: center; }
    .tile { height: 50px; border-radius: 5px; background: #34402e; border: 1px solid #3e4937; flex-direction: column; justify-content: flex-start; padding-top: 9px; }
    .plate { background: #fff; width: 28px; height: 30px; display: flex; align-items: center; }
    .ind { width: 20px; height: 4px; border-radius: 2px; background: #4cc2ff; margin-top: 5px; }
    .badge { height: 20px; border-radius: 50%; background: #4cc2ff; color: #10202a; font-size: 12px; }
  `;

  private tools(): Item[] {
    const at = (cx: number, w: number, c: unknown): Item => [cx - w / 2, w, c];
    const sep = (x: number): Item => [x, 1, "", "sep"];
    return [
      at(29, 16, T.home), sep(57), at(84.5, 16, T.back), at(125, 16, T.fwd), at(164, 18, T.redo), at(188, 6, caret()),
      at(214, 16, T.save), at(254, 14, T.dbAdd), at(293, 14, T.dbPause), at(317, 6, caret()), at(341, 16, T.refresh), at(366, 6, caret("#bbb")),
      sep(381), at(407, 18, T.newSheet), at(431, 6, caret()), at(457, 16, T.dup), at(496, 18, T.clear), at(520, 6, caret()),
      sep(535), at(562, 16, T.swap), at(602, 16, T.asc), at(642, 16, T.desc), sep(671), at(698, 14, T.pen), at(719.5, 6, caret("#555")),
      at(746, 14, T.clip), at(769.5, 6, caret("#aaa")), at(798, 16, T.text), at(836, 14, T.pin),
      [868, 128, caret("#bbb"), "combo"], sep(1013), at(1040, 18, T.cards), at(1062, 6, caret("#aaa")), at(1090, 16, T.present),
      sep(1119), at(1147, 14, T.share), at(1449, 18, T.guide), [1483, 13, T.showme], [1501, 69, t("Show Me", 69)],
    ];
  }

  private menu(): Item[] {
    return ([[7, 21, "File"], [42, 30, "Data"], [86, 70, "Worksheet"], [169, 73, "Dashboard"], [256, 34, "Story"], [303, 54, "Analysis"], [370, 30, "Map"], [413, 48, "Format"], [474, 41, "Server"], [528, 56, "Window"], [597, 31, "Help"]] as [number, number, string][])
      .map(([x, w, s]): Item => [x, w, t(s, w)]);
  }

  private side() {
    return html`<div class="side">
      <div class="ptabs"><div class="pt1">${t("Dashboard", 86)}</div>
        <div class="pt2">${t("Layout", 52)}${icon(6, 8, svg`<path d="M5 .5 1.500 4 5 7.500" fill="none" stroke="#555"/>`)}</div></div>
      <div class="dev">${t("Default", 55)}</div>
      <div class="phone">${t("Phone", 49)}</div>
      <div class="preview">${t("Device Preview", 104)}</div>
      <div class="hd h1">${t("Size", 33)}</div>
      <div class="browser">${t("Desktop Browser (1000 ...", 179)}${caret()}</div>
      <div class="hd h2">${t("Sheets", 55)}</div>
      <div class="sheets"><div>${[4, 5, 6, 7, 8].map((n) => html`<div class="sh">${sheetIcon}${t("Sheet " + n, 59)}</div>`)}</div>
        <div class="track"><div class="thumb"></div></div></div>
      <div class="hd h3">${t("Objects", 60)}</div>
      <div class="objs"><div class="ol">${OBJECTS.map(([i, s, w]) => html`<div class="o">${i}${t(s, w)}</div>`)}</div>
        <div class="otrack">${icon(6, 4, svg`<path d="M0 3.500h6L3 .5z" fill="#999"/>`)}<div class="othumb"></div><div class="grow"></div>${caret("#333")}</div></div>
      <div class="seg"><div class="tiled">${t("Tiled", 34)}</div><div class="float">${t("Floating", 57)}</div></div>
      <div class="chk"><div class="box">${icon(16, 16, svg`<path d="m4 8.500 3 3.500 5.500-9" fill="none" stroke="#444" stroke-width="1.500"/>`)}</div>${t("Show dashboard title", 149)}</div>
    </div>`;
  }

  private table() {
    return html`<div class="tbl">
      <div class="r head"><div class="lab">${t("State", 39)}</div><div></div><div></div><div></div></div>
      ${DATA.map((d) => html`<div class="r">
        <div class="lab">${d.label.map((l, i) => t(l, d.lw[i]))}</div>
        <div class="num"><div class="fill" style="width:${d.aw}px;background:${d.ac}"></div><div class="txt">${t(d.area, 88)}</div></div>
        <div class="mid">${t(d.mid, d.mw)}</div>
        <div class="num p">${d.pw ? html`<div class="fill" style="width:${d.pw}px;background:${d.pc}"></div>` : ""}<div class="txt">${t(d.prod, d.prod.endsWith(",") ? 84 : 88)}</div></div>
      </div>`)}
      <div class="r foot"><div></div><div>${t("Area", 33)}</div><div></div><div>${t("Production", 77)}</div></div>
    </div>`;
  }

  render() {
    return html`
      <div class="bar title">${row([
        [4, 17, html`<div class="logo">${tableauMark(17, 1.8)}</div>`],
        [27, 468, t("Tableau - indian agriculture tableau - Tableau license expires in 11 days", 468)],
        [1446, 14, icon(14, 14, svg`<path d="M.5 6.500h12.500" stroke="#222"/>`)],
        [1503, 14, icon(14, 14, svg`<rect x=".7" y="3.300" width="9.600" height="9.600" rx="1.500" fill="none" stroke="#111" stroke-width="1.400"/><path d="M3.500 1h6.500q3 0 3 3v6.500" fill="none" stroke="#111" stroke-width="1.300"/>`)],
        [1563, 13, icon(13, 13, svg`<path d="m.5.5 12 12m0-12-12 12" stroke="#222" stroke-width="1.200"/>`)],
      ])}</div>
      <div class="bar menu">${row(this.menu())}</div>
      <div class="bar tools">${row(this.tools())}</div>
      <div class="body">
        ${this.side()}
        <div class="canvas">
          <div class="left">
            <div class="dtitle">${t("Production in area.count wise", 373)}</div>
            <div class="kpis">${row([
              [233, 117, html`<div class="kt">${t("Area", 54)}</div><div class="kv">${t("4,030,580,636", 104)}</div>`],
              [409, 101, html`<div class="kt">${t("Yield", 58)}</div><div class="kv">${t("27,425,310", 81)}</div>`],
              [578, 196, html`<div class="kt">${t("Count", 69)}</div><div class="kv l">${t("3,45,407", 63)}</div>`],
              [780, 110, html`<div class="kt kp">${t("Producti", 94)}<br />${t("on", 27)}</div>`],
            ], 223)}</div>
            <div class="h2s">${row([[240, 321, t("Statewise Agriculture Land", 321)], [632, 225, t("Area Vs Production", 225)]], 223)}</div>
            <div class="views">
              <svg class="map" viewBox="9 486 1008 1494">${map}</svg>
              ${this.table()}
            </div>
          </div>
          <div class="right">
            <div class="ft">${t("State", 39)}</div>
            <div class="fl"><div>${STATES.map(([s, w]) => html`<div class="fi"><div class="cb">${icon(16, 16, svg`<path d="m3 6 2.500 2.500L9 3" fill="none" stroke="#555" stroke-width="1.500"/>`)}</div>${t(s, w + 1)}</div>`)}</div>
              <div class="ftrack"><div class="fthumb"></div></div></div>
            <div class="lt">${t("Area", 33)}</div>
            <div class="leg">${LEGEND.map((c) => html`<i style="background:${c}"></i>`)}</div>
            <div class="ll">${t("273", 27)}${t("543M", 40)}</div>
          </div>
        </div>
      </div>
      <div class="tabs">${row(TABS)}</div>
      <div class="bar status">${row([
        [1197, 1, "", "ln"],
        [1202, 12, icon(10, 14, svg`<circle cx="5" cy="4" r="2.500" fill="none" stroke="#888"/><path d="M1 12.500V10l2-2.500h4L9 10v2.500z" fill="none" stroke="#888"/>`)],
        [1220, 66, t("Pavithra  S", 66)], [1336, 6, caret("#000")],
        [1354, 1, "", "ln"], [1387, 1, "", "ln"], [1419, 1, "", "ln"], [1477, 1, "", "ln"],
        [1484, 7, icon(7, 7, svg`<path d="M1 0v7" stroke="#444"/><path d="M6 0v7L2 3.500z" fill="#444"/>`)],
        [1498, 6, icon(5, 7, svg`<path d="M4.500 0v7L1 3.500z" fill="#444"/>`)],
        [1511, 6, icon(5, 7, svg`<path d="M1 0v7l3.500-3.500z" fill="#444"/>`)],
        [1524, 7, icon(7, 7, svg`<path d="M6 0v7" stroke="#444"/><path d="M1 0v7l4-3.500z" fill="#444"/>`)],
        [1538, 1, "", "ln"],
        [1546, 10, icon(10, 9, svg`<path d="M1.500 0v9M5 0v9M8.500 0v9" stroke="#bbb" stroke-width="2.500" stroke-dasharray="2.300 1"/>`)],
        [1565, 10, icon(10, 9, svg`<path d="M0 0h10v5.500H0z" fill="#b5b5b5"/><path d="M0 7.800h10" stroke="#b5b5b5" stroke-width="2.200" stroke-dasharray="2.800 .8"/>`)],
        [1584, 10, icon(10, 9, svg`<path d="M0 0h10v9H0z" fill="#666"/>`)],
      ])}</div>
      <div class="bar task">${row([
        [26, 30, task.weather],
        [63, 90, html`${t("30°C", 31)}<span class="dim">${t("Mostly sunny", 90)}</span>`, "two a"],
        [510, 30, task.win], [567, 28, task.search], [621, 30, task.view], [675, 30, task.chat], [730, 32, task.files],
        [785, 32, task.edge], [841, 30, task.store], [895, 31, task.hp], [951, 30, task.help], [1007, 28, task.mcafee],
        [1051, 50, html`<div class="plate">${tableauMark(28, 1.5)}</div><div class="ind"></div>`, "tile"],
        [1285, 15, icon(15, 9, svg`<path d="m.8 8 6.700-6.800L14.200 8" fill="none" stroke="#ddd" stroke-width="1.400"/>`)],
        [1320, 30, html`${t("ENG", 30)}${t("IN", 14)}`, "two"],
        [1372, 20, icon(20, 16, svg`<g fill="none" stroke="#fff" stroke-width="1.500"><path d="M1 6a13 13 0 0 1 18 0M3.800 9a9 9 0 0 1 12.400 0M6.500 12a5 5 0 0 1 7 0"/></g><circle cx="10" cy="14" r="1.700" fill="#fff"/>`)],
        [1402, 21, icon(21, 16, svg`<path d="M1 5.500h3.500L9 1.500v13l-4.500-4H1zM12 5.500q2 2.500 0 5M14.500 3.500q4 4.500 0 9M17 1.500q5.500 6.500 0 13" fill="none" stroke="#fff" stroke-width="1.300"/>`)],
        [1432, 21, icon(21, 14, svg`<rect x="1" y="1" width="16" height="12" rx="3" fill="none" stroke="#fff" stroke-width="1.500"/><rect x="3.500" y="3.500" width="8" height="7" rx="1" fill="#fff"/><path d="M19 5v4" stroke="#fff" stroke-width="2"/>`)],
        [1472, 74, html`${t("15:47", 35)}${t("21-10-2023", 74)}`, "two e"],
        [1555, 20, "3", "badge"],
      ])}</div>`;
  }
}
